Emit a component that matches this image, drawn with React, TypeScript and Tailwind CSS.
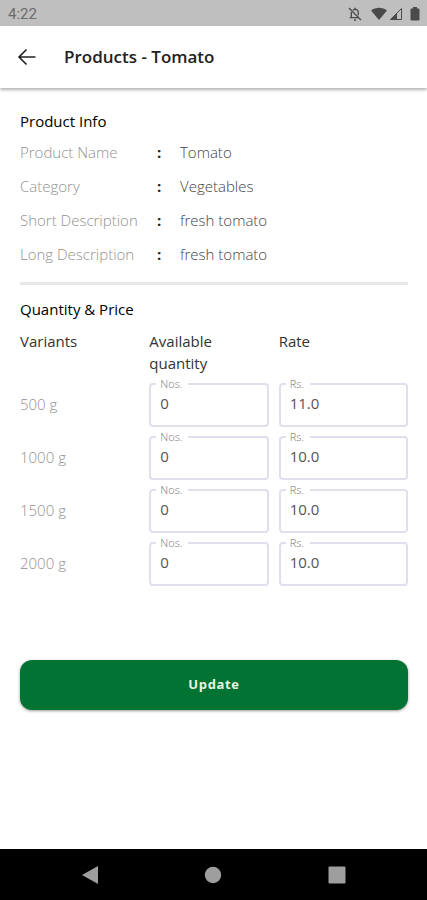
import { useState } from 'react'

const details = [
  { label: 'Product Name', value: 'Tomato' },
  { label: 'Category', value: 'Vegetables' },
  { label: 'Short Description', value: 'fresh tomato' },
  { label: 'Long Description', value: 'fresh tomato' },
]

const initialVariants = [
  { name: '500 g', quantity: '0', rate: '11.0' },
  { name: '1000 g', quantity: '0', rate: '10.0' },
  { name: '1500 g', quantity: '0', rate: '10.0' },
  { name: '2000 g', quantity: '0', rate: '10.0' },
]

function StatusBar() {
  return (
    <div className="flex h-[26px] items-center justify-between bg-[#bfbfbf] pt-[2px] pr-[7px] pl-2 text-[#6b6b6b]">
      <span className="font-['Roboto'] text-[15px] leading-5">4:22</span>
      <div className="flex items-center text-[#4a4a4a]">
        <svg className="mr-2 h-4 w-4" viewBox="0 0 24 24" fill="none" stroke="currentColor" strokeWidth="2">
          <path d="M3 3l18 18" />
          <path d="M6.500 9v8M4 17.500h14" />
          <path d="M9 6.300c.9-.8 2-1.300 3-1.300 3 0 5 2.300 5 5.500V14" />
          <path d="M12 2.500V5M10.500 21h3" />
        </svg>
        <svg className="mr-[2px] h-4 w-4" viewBox="0 0 16 16" fill="currentColor">
          <path d="M0 4.500C4.500.8 11.500.8 16 4.500L8 14z" />
        </svg>
        <svg className="mr-[7px] h-4 w-[14px]" viewBox="0 0 14 16" fill="currentColor">
          <path d="M12.500 2.500v11H1.500z" fill="none" stroke="currentColor" strokeWidth="1" />
          <path d="M8 7V14H1z" />
        </svg>
        <svg className="h-4 w-[10px]" viewBox="0 0 10 16" fill="currentColor">
          <path d="M3 1h4v1.500h1.500q1 0 1 1V13.500q0 1-1 1h-7q-1 0-1-1V3.500q0-1 1-1H3z" />
        </svg>
      </div>
    </div>
  )
}

function Header() {
  return (
    <header className="flex h-[62px] items-center bg-white pl-[17px] shadow-[0_2px_3px_rgba(0,0,0,0.3)]">
      <button type="button" aria-label="Back" className="text-[#222]">
        <svg className="h-5 w-5" viewBox="0 0 20 20" fill="none" stroke="currentColor" strokeWidth="1.6">
          <path d="M18.500 10H2.500M9.500 2.500L2 10l7.500 7.500" />
        </svg>
      </button>
      <h1 className="ml-[27px] text-[17px] leading-6 font-semibold text-[#222]">Products - Tomato</h1>
    </header>
  )
}

type FieldProps = {
  id: string
  label: string
  value: string
  onChange: (value: string) => void
}

function OutlinedField({ id, label, value, onChange }: FieldProps) {
  return (
    <fieldset className="h-[49px] min-w-0 rounded border-2 border-[#dfdfee] px-[5px]">
      <legend className="h-3 pr-[6px] pl-1 text-[11px] leading-3 font-light text-[#777]">
        <label htmlFor={id} className="block">{label}</label>
      </legend>
      <input
        id={id}
        type="text"
        inputMode="decimal"
        value={value}
        onChange={(e) => onChange(e.target.value)}
        className="block h-[26px] w-full bg-transparent px-1 text-[15px] text-[#555] outline-none"
      />
    </fieldset>
  )
}

export default function App() {
  const [variants, setVariants] = useState(initialVariants)

  const update = (index: number, key: 'quantity' | 'rate', value: string) => {
    setVariants(variants.map((v, i) => (i === index ? { ...v, [key]: value } : v)))
  }

  return (
    <div className="flex min-h-screen flex-col bg-white font-['Open_Sans','Noto_Sans',sans-serif]">
      <StatusBar />
      <Header />

      <main className="flex-1 pt-[22px] pr-[19px] pl-5">
        <section>
          <h2 className="text-[15px] leading-[22px] font-medium text-black">Product Info</h2>
          <dl className="mt-2">
            {details.map((item) => (
              <div key={item.label} className="mb-[10px] flex text-[15px] leading-6 font-light">
                <dt className="w-[137px] whitespace-nowrap text-[#929292]">{item.label}</dt>
                <dd className="flex text-[#444]">
                  <span className="w-[23px] font-bold text-[#222]">:</span>
                  {item.value}
                </dd>
              </div>
            ))}
          </dl>
        </section>

        <hr className="mt-4 border-t-[3px] border-[#e8e8e8]" />

        <section>
          <h2 className="mt-[13px] text-[15px] leading-[22px] font-medium text-black">Quantity &amp; Price</h2>
          <table className="mt-[10px] w-full table-fixed text-left">
            <thead>
              <tr className="align-top text-[15px] leading-[22px] text-[#333]">
                <th className="pb-1 font-normal">Variants</th>
                <th className="pr-[10px] pb-1 font-normal">Available quantity</th>
                <th className="pb-1 font-normal">Rate</th>
              </tr>
            </thead>
            <tbody>
              {variants.map((variant, i) => (
                <tr key={variant.name}>
                  <td className="text-[15px] font-light text-[#929292]">{variant.name}</td>
                  <td className="pr-[10px] pb-1">
                    <OutlinedField
                      id={`quantity-${i}`}
                      label="Nos."
                      value={variant.quantity}
                      onChange={(value) => update(i, 'quantity', value)}
                    />
                  </td>
                  <td className="pb-1">
                    <OutlinedField
                      id={`rate-${i}`}
                      label="Rs."
                      value={variant.rate}
                      onChange={(value) => update(i, 'rate', value)}
                    />
                  </td>
                </tr>
              ))}
            </tbody>
          </table>
        </section>

        <button
          type="button"
          className="mt-[70px] h-[50px] w-full rounded-xl bg-[#027333] text-[13px] font-bold tracking-wider text-[#e8f5e0] shadow-[0_1px_3px_rgba(0,0,0,0.4)]"
        >
          Update
        </button>
      </main>

      {/* Android navigation bar */}
      <nav className="grid h-[51px] grid-cols-3 items-center bg-black px-7 text-[#9e9e9e]">
        <button type="button" aria-label="Back" className="flex justify-center">
          <svg className="h-5 w-5" viewBox="0 0 20 20" fill="currentColor">
            <path d="M18 1v18L2 10z" />
          </svg>
        </button>
        <button type="button" aria-label="Home" className="flex justify-center">
          <svg className="h-5 w-5" viewBox="0 0 20 20" fill="currentColor">
            <circle cx="10" cy="10" r="8.2" />
          </svg>
        </button>
        <button type="button" aria-label="Recent apps" className="flex justify-center">
          <svg className="h-5 w-5" viewBox="0 0 20 20" fill="currentColor">
            <rect x="1.500" y="1.500" width="17" height="17" rx="1" />
          </svg>
        </button>
      </nav>
    </div>
  )
}
